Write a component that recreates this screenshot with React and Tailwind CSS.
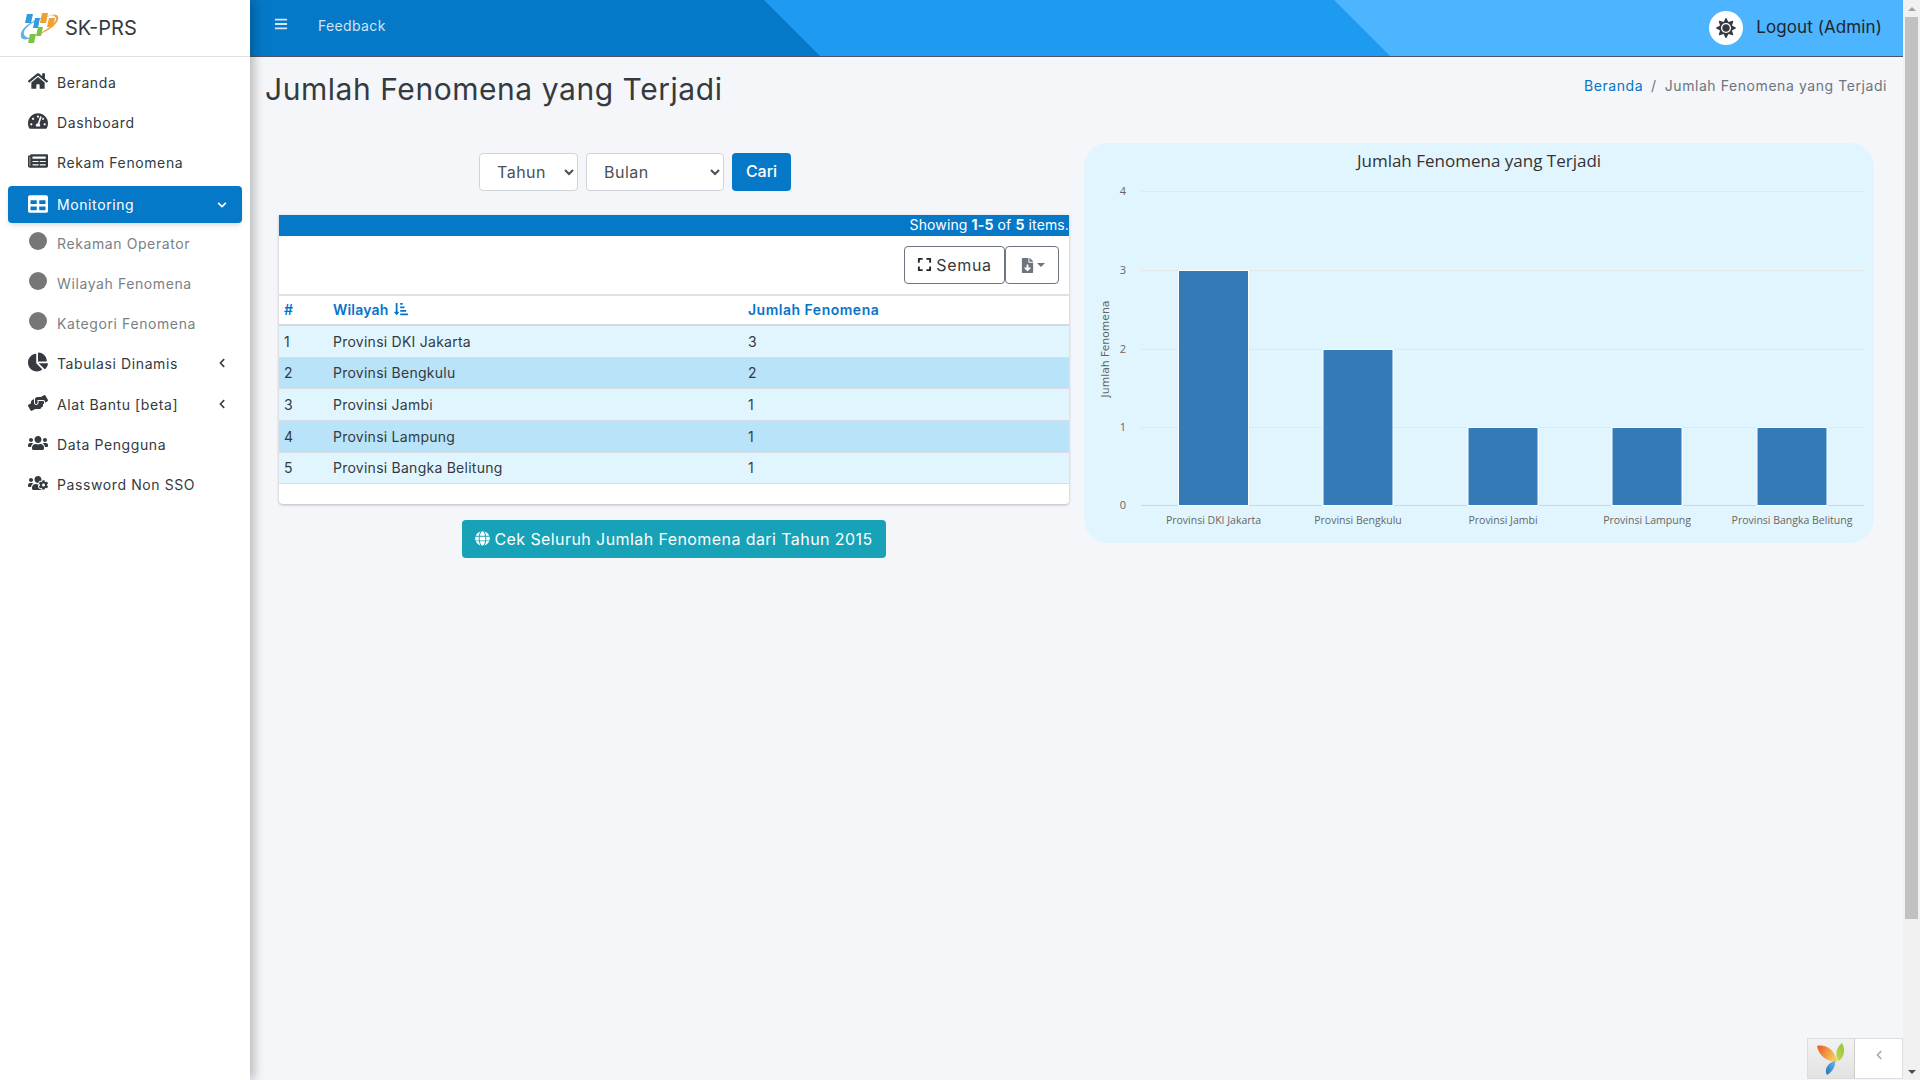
import React from 'react';
import {
  FaHome, FaTachometerAlt, FaNewspaper, FaTable, FaChevronDown, FaChevronLeft, FaChartPie, FaHandsHelping,
  FaUsers, FaUsersCog, FaBars, FaSun, FaExpand, FaFileDownload, FaGlobe, FaSortAmountDownAlt,
} from 'react-icons/fa';

function Logo() {
  return (
    <svg width="40" height="30" viewBox="0 0 40 30" className="shrink-0">
      <path d="M1 24 C-1 16 12 5 34 2 C26 3 7 10 4 19 C3 23 7 25 12 25 C6 27 2 27 1 24Z" fill="#5db4e6" />
      <path d="M30 2 C38 0 40 4 37 9 C33 15 24 20 15 23 C25 18 37 10 36 5 C35 3 33 2 30 2Z" fill="#e9a44a" />
      <polygon points="7,1 13,1 11,10 5,10" fill="#2f9be0" />
      <polygon points="15,5 20,5 18,15 13,15" fill="#2f9be0" />
      <polygon points="22,0 28,0 26,10 20,10" fill="#f0a030" />
      <polygon points="29,5 35,5 33,14 27,14" fill="#f0a030" />
      <polygon points="18,14 23,14 21,23 16,23" fill="#7dc242" />
      <polygon points="10,21 16,21 14,30 8,30" fill="#7dc242" />
    </svg>
  );
}

function YiiLogo() {
  return (
    <svg width="30" height="32" viewBox="0 0 30 32">
      <defs>
        <linearGradient id="yo" x1="0" y1="0" x2="1" y2="0.4"><stop offset="0" stopColor="#e8552a" /><stop offset="1" stopColor="#f6c85a" /></linearGradient>
        <linearGradient id="yg" x1="1" y1="0" x2="0" y2="1"><stop offset="0" stopColor="#8fc43a" /><stop offset="1" stopColor="#c4d84a" /></linearGradient>
        <linearGradient id="yb" x1="1" y1="0" x2="0" y2="1"><stop offset="0" stopColor="#6cb4e4" /><stop offset="1" stopColor="#1d74c8" /></linearGradient>
      </defs>
      <path d="M1 3 C9 1 19 6 21 19 C13 19 3 14 1 3Z" fill="url(#yo)" />
      <path d="M26 0 C30 7 28 15 22 18 C19 12 20 4 26 0Z" fill="url(#yg)" />
      <path d="M19 18 C20 24 15 30 11 32 C8 27 11 20 19 18Z" fill="url(#yb)" />
    </svg>
  );
}

function NavItem({ icon: Icon, label, caret, active, sub, h = 'h-[40px]', extra = '' }) {
  const base = active
    ? 'bg-[#0578c8] text-white rounded shadow-md'
    : sub
    ? 'text-[#7a7f85]'
    : 'text-[#343a40]';
  return (
    <a className={`flex items-center mx-2 ${h} pl-[18px] pr-[15px] ${base} ${extra}`}>
      <span className="w-[31px] shrink-0 flex items-center">
        {sub ? (
          <span className="block w-[18px] h-[18px] rounded-full bg-[#777777] ml-[3px] -mt-1" />
        ) : (
          <Icon className="text-[20px] ml-[2px] -mt-0.5" />
        )}
      </span>
      <span className="flex-1 text-[14px] tracking-[0.6px] whitespace-nowrap">{label}</span>
      {caret === 'down' && <FaChevronDown className="text-[10px]" />}
      {caret === 'left' && <FaChevronLeft className="text-[10px]" />}
    </a>
  );
}

function Sidebar() {
  return (
    <aside className="w-[250px] shrink-0 bg-white h-full z-20 shadow-[4px_0_10px_rgba(0,0,0,0.25)] flex flex-col">
      <div className="h-[57px] border-b border-[#dee2e6] flex items-center pl-[20px] gap-[5px]">
        <Logo />
        <span className="text-[20px] text-[#343a40]">SK-PRS</span>
      </div>
      <nav className="pt-[5px] flex flex-col">
        <NavItem icon={FaHome} label="Beranda" />
        <NavItem icon={FaTachometerAlt} label="Dashboard" />
        <NavItem icon={FaNewspaper} label="Rekam Fenomena" />
        <NavItem icon={FaTable} label="Monitoring" caret="down" active h="h-[37px]" extra="mt-[4px]" />
        <NavItem label="Rekaman Operator" sub />
        <NavItem label="Wilayah Fenomena" sub />
        <NavItem label="Kategori Fenomena" sub />
        <NavItem icon={FaChartPie} label="Tabulasi Dinamis" caret="left" />
        <NavItem icon={FaHandsHelping} label="Alat Bantu [beta]" caret="left" extra="mt-[1px]" />
        <NavItem icon={FaUsers} label="Data Pengguna" />
        <NavItem icon={FaUsersCog} label="Password Non SSO" />
      </nav>
    </aside>
  );
}

function Header() {
  return (
    <header className="relative h-[57px] shrink-0 border-b border-[#4b5563] bg-[#0578c8] overflow-hidden">
      <div className="absolute inset-0 bg-[#1e9af0] [clip-path:polygon(514px_0,1653px_0,1653px_56px,570px_56px)]" />
      <div className="absolute inset-0 bg-[#4db4ff] [clip-path:polygon(1084px_0,1653px_0,1653px_56px,1140px_56px)]" />
      <div className="relative flex items-center h-full pl-[24px] pr-[21px]">
        <FaBars className="text-[#d5e8f6] text-[14px] -mt-[9px]" />
        <span className="ml-[30px] text-[14px] tracking-[0.35px] text-[#cfe4f5] -mt-[5px]">Feedback</span>
        <div className="ml-auto flex items-center gap-[13px]">
          <span className="w-[34px] h-[34px] rounded-full bg-white flex items-center justify-center">
            <FaSun className="text-[#343a40] text-[20px]" />
          </span>
          <span className="text-[17px] tracking-[0.1px] text-[#212529]">Logout (Admin)</span>
        </div>
      </div>
    </header>
  );
}

const ROWS = [
  ['1', 'Provinsi DKI Jakarta', '3'],
  ['2', 'Provinsi Bengkulu', '2'],
  ['3', 'Provinsi Jambi', '1'],
  ['4', 'Provinsi Lampung', '1'],
  ['5', 'Provinsi Bangka Belitung', '1'],
];

function TablePanel() {
  return (
    <div className="bg-white rounded-b shadow-[0_1px_3px_rgba(0,0,0,0.25)]">
      <div className="h-[21px] bg-[#0578c8] text-white text-[14px] leading-[19px] text-right whitespace-nowrap tracking-[0.12px]">
        Showing <b>1-5</b> of <b>5</b> items.
      </div>
      <div className="h-[58px] flex items-start justify-end pt-[10px] pr-[10px]">
        <button className="w-[101px] h-[38px] pb-[1px] flex items-center justify-center gap-[4px] border border-[#6c757d] rounded text-[#343a40] text-[16px] tracking-[0.7px]">
          <FaExpand className="text-[15px] text-[#212529]" /> Semua
        </button>
        <button className="w-[54px] h-[38px] flex items-center justify-center gap-[2px] border border-[#6c757d] rounded text-[#6c757d]">
          <FaFileDownload className="text-[15px]" />
          <span className="block w-0 h-0 border-x-[4px] border-x-transparent border-t-[4px] border-t-[#6c757d]" />
        </button>
      </div>
      <table className="w-full table-fixed text-[14px] text-[#343a40]">
        <colgroup>
          <col className="w-[49px]" />
          <col className="w-[415px]" />
          <col />
        </colgroup>
        <thead>
          <tr className="h-[30px] border-y-2 border-t-[#dee2e6] border-b-[#d4d8dc] text-left text-[#0575c9]">
            <th className="pl-[5px] pb-[2px] font-semibold">#</th>
            <th className="pl-[5px] pb-[2px] font-semibold">
              <span className="inline-flex items-center gap-[5px] tracking-[0.2px]">Wilayah <FaSortAmountDownAlt className="text-[14px]" /></span>
            </th>
            <th className="pl-[5px] pb-[2px] font-semibold tracking-[0.5px]">Jumlah Fenomena</th>
          </tr>
        </thead>
        <tbody>
          {ROWS.map((r, i) => (
            <tr key={r[0]} className={`${i === 1 || i === 4 ? 'h-[31px]' : 'h-[32px]'} border-b border-[#d6dee4] ${i % 2 ? 'bg-[#b8e3f9]' : 'bg-[#e1f5fe]'}`}>
              <td className="pl-[5px]">{r[0]}</td>
              <td className="pl-[5px] tracking-[0.25px]">{r[1]}</td>
              <td className="pl-[5px]">{r[2]}</td>
            </tr>
          ))}
        </tbody>
      </table>
      <div className="h-[20px]" />
    </div>
  );
}

const BARS = [
  { x: 94.5, y: 127.5, w: 70, h: 235, label: 'Provinsi DKI Jakarta' },
  { x: 239, y: 206.5, w: 70, h: 156, label: 'Provinsi Bengkulu' },
  { x: 384, y: 284.5, w: 70, h: 78, label: 'Provinsi Jambi' },
  { x: 528, y: 284.5, w: 70, h: 78, label: 'Provinsi Lampung' },
  { x: 673, y: 284.5, w: 70, h: 78, label: 'Provinsi Bangka Belitung' },
];
const GRID = [
  { y: 48.5, t: '4' },
  { y: 127.5, t: '3' },
  { y: 206.5, t: '2' },
  { y: 284.5, t: '1' },
];

function Chart() {
  return (
    <div className="w-[790px] h-[400px] bg-[#e1f5fe] rounded-[24px] overflow-hidden">
      <svg width="790" height="400" viewBox="0 0 790 400" fontFamily="'Open Sans', sans-serif">
        <text x="395" y="24" textAnchor="middle" fontSize="17" fill="#333333">Jumlah Fenomena yang Terjadi</text>
        {GRID.map((g) => (
          <g key={g.t}>
            <line x1="57" x2="780" y1={g.y} y2={g.y} stroke="#e6e6e6" />
            <text x="42" y={g.y + 3} textAnchor="end" fontSize="11" fill="#666666">{g.t}</text>
          </g>
        ))}
        <text x="42" y={366} textAnchor="end" fontSize="11" fill="#666666">0</text>
        <line x1="57" x2="780" y1="362.5" y2="362.5" stroke="#ccd6eb" />
        {BARS.map((b) => (
          <g key={b.label}>
            <rect x={b.x} y={b.y} width={b.w} height={b.h} fill="#337ab7" stroke="#ffffff" strokeWidth="1" />
            <text x={b.x + 35} y="381" textAnchor="middle" fontSize="10.5" fill="#666666">{b.label}</text>
          </g>
        ))}
        <text transform="translate(25 206) rotate(-90)" textAnchor="middle" fontFamily="'DejaVu Sans', sans-serif" fontSize="10.8" fill="#666666">Jumlah Fenomena</text>
      </svg>
    </div>
  );
}

function Scrollbar() {
  return (
    <div className="w-[17px] shrink-0 h-full bg-[#f1f1f1] flex flex-col items-center z-30">
      <div className="h-[17px] flex items-center justify-center">
        <span className="block w-0 h-0 border-x-[4px] border-x-transparent border-b-[4px] border-b-[#a3a3a3]" />
      </div>
      <div className="w-[13px] h-[902px] ml-[2px] mr-[2px] bg-[#c1c1c1]" />
      <div className="mt-auto h-[17px] flex items-center justify-center">
        <span className="block w-0 h-0 border-x-[4px] border-x-transparent border-t-[4px] border-t-[#505050]" />
      </div>
    </div>
  );
}

export default function App() {
  return (
    <div className="relative flex h-screen w-full overflow-hidden bg-[#f4f6f9] font-['Inter',sans-serif]">
      <Sidebar />
      <main className="flex-1 min-w-0 flex flex-col">
        <Header />
        <div className="flex items-start justify-between pl-[15px] pr-[16px] h-[86px] pt-[11px]">
          <h1 className="text-[30px] leading-[42px] text-[#343a40] tracking-[0.55px] m-0">Jumlah Fenomena yang Terjadi</h1>
          <div className="flex items-center text-[14px] mt-[7px] tracking-[0.57px] text-[#6c757d]">
            <a className="text-[#0575c9]">Beranda</a>
            <span className="px-[8px]">/</span>
            <span>Jumlah Fenomena yang Terjadi</span>
          </div>
        </div>
        <div className="flex items-start pl-[29px] gap-[15px]">
          <section className="w-[790px] pt-[10px] flex flex-col">
            <form className="flex items-center gap-2 pl-[200px] mb-[24px]">
              <select className="w-[99px] h-[38px] bg-white border border-[#ced4da] rounded pl-[13px] text-[16px] tracking-[0.5px] text-[#495057]">
                <option>Tahun</option>
              </select>
              <select className="w-[138px] h-[38px] bg-white border border-[#ced4da] rounded pl-[13px] text-[16px] tracking-[0.5px] text-[#495057]">
                <option>Bulan</option>
              </select>
              <button type="button" className="w-[59px] h-[38px] bg-[#0578c8] rounded text-white text-[16px] font-medium pb-[2px]">Cari</button>
            </form>
            <TablePanel />
            <button type="button" className="self-center mt-[16px] w-[424px] h-[38px] rounded bg-[#17a2b8] text-white text-[16px] tracking-[0.42px] flex items-center justify-center gap-[4px] whitespace-nowrap">
              <FaGlobe className="text-[15px]" /> Cek Seluruh Jumlah Fenomena dari Tahun 2015
            </button>
          </section>
          <Chart />
        </div>
      </main>
      <Scrollbar />
      <div className="absolute right-[17px] bottom-[1px] w-[96px] h-[41px] flex border border-[#dddddd] bg-white z-20">
        <div className="w-[47px] bg-gradient-to-b from-[#f2f2f2] to-[#e2e2e2] border-r border-[#cccccc] flex items-center justify-center">
          <YiiLogo />
        </div>
        <div className="flex-1 flex items-center justify-center pb-2 text-[#aaaaaa]">
          <FaChevronLeft className="text-[10px]" />
        </div>
      </div>
    </div>
  );
}
